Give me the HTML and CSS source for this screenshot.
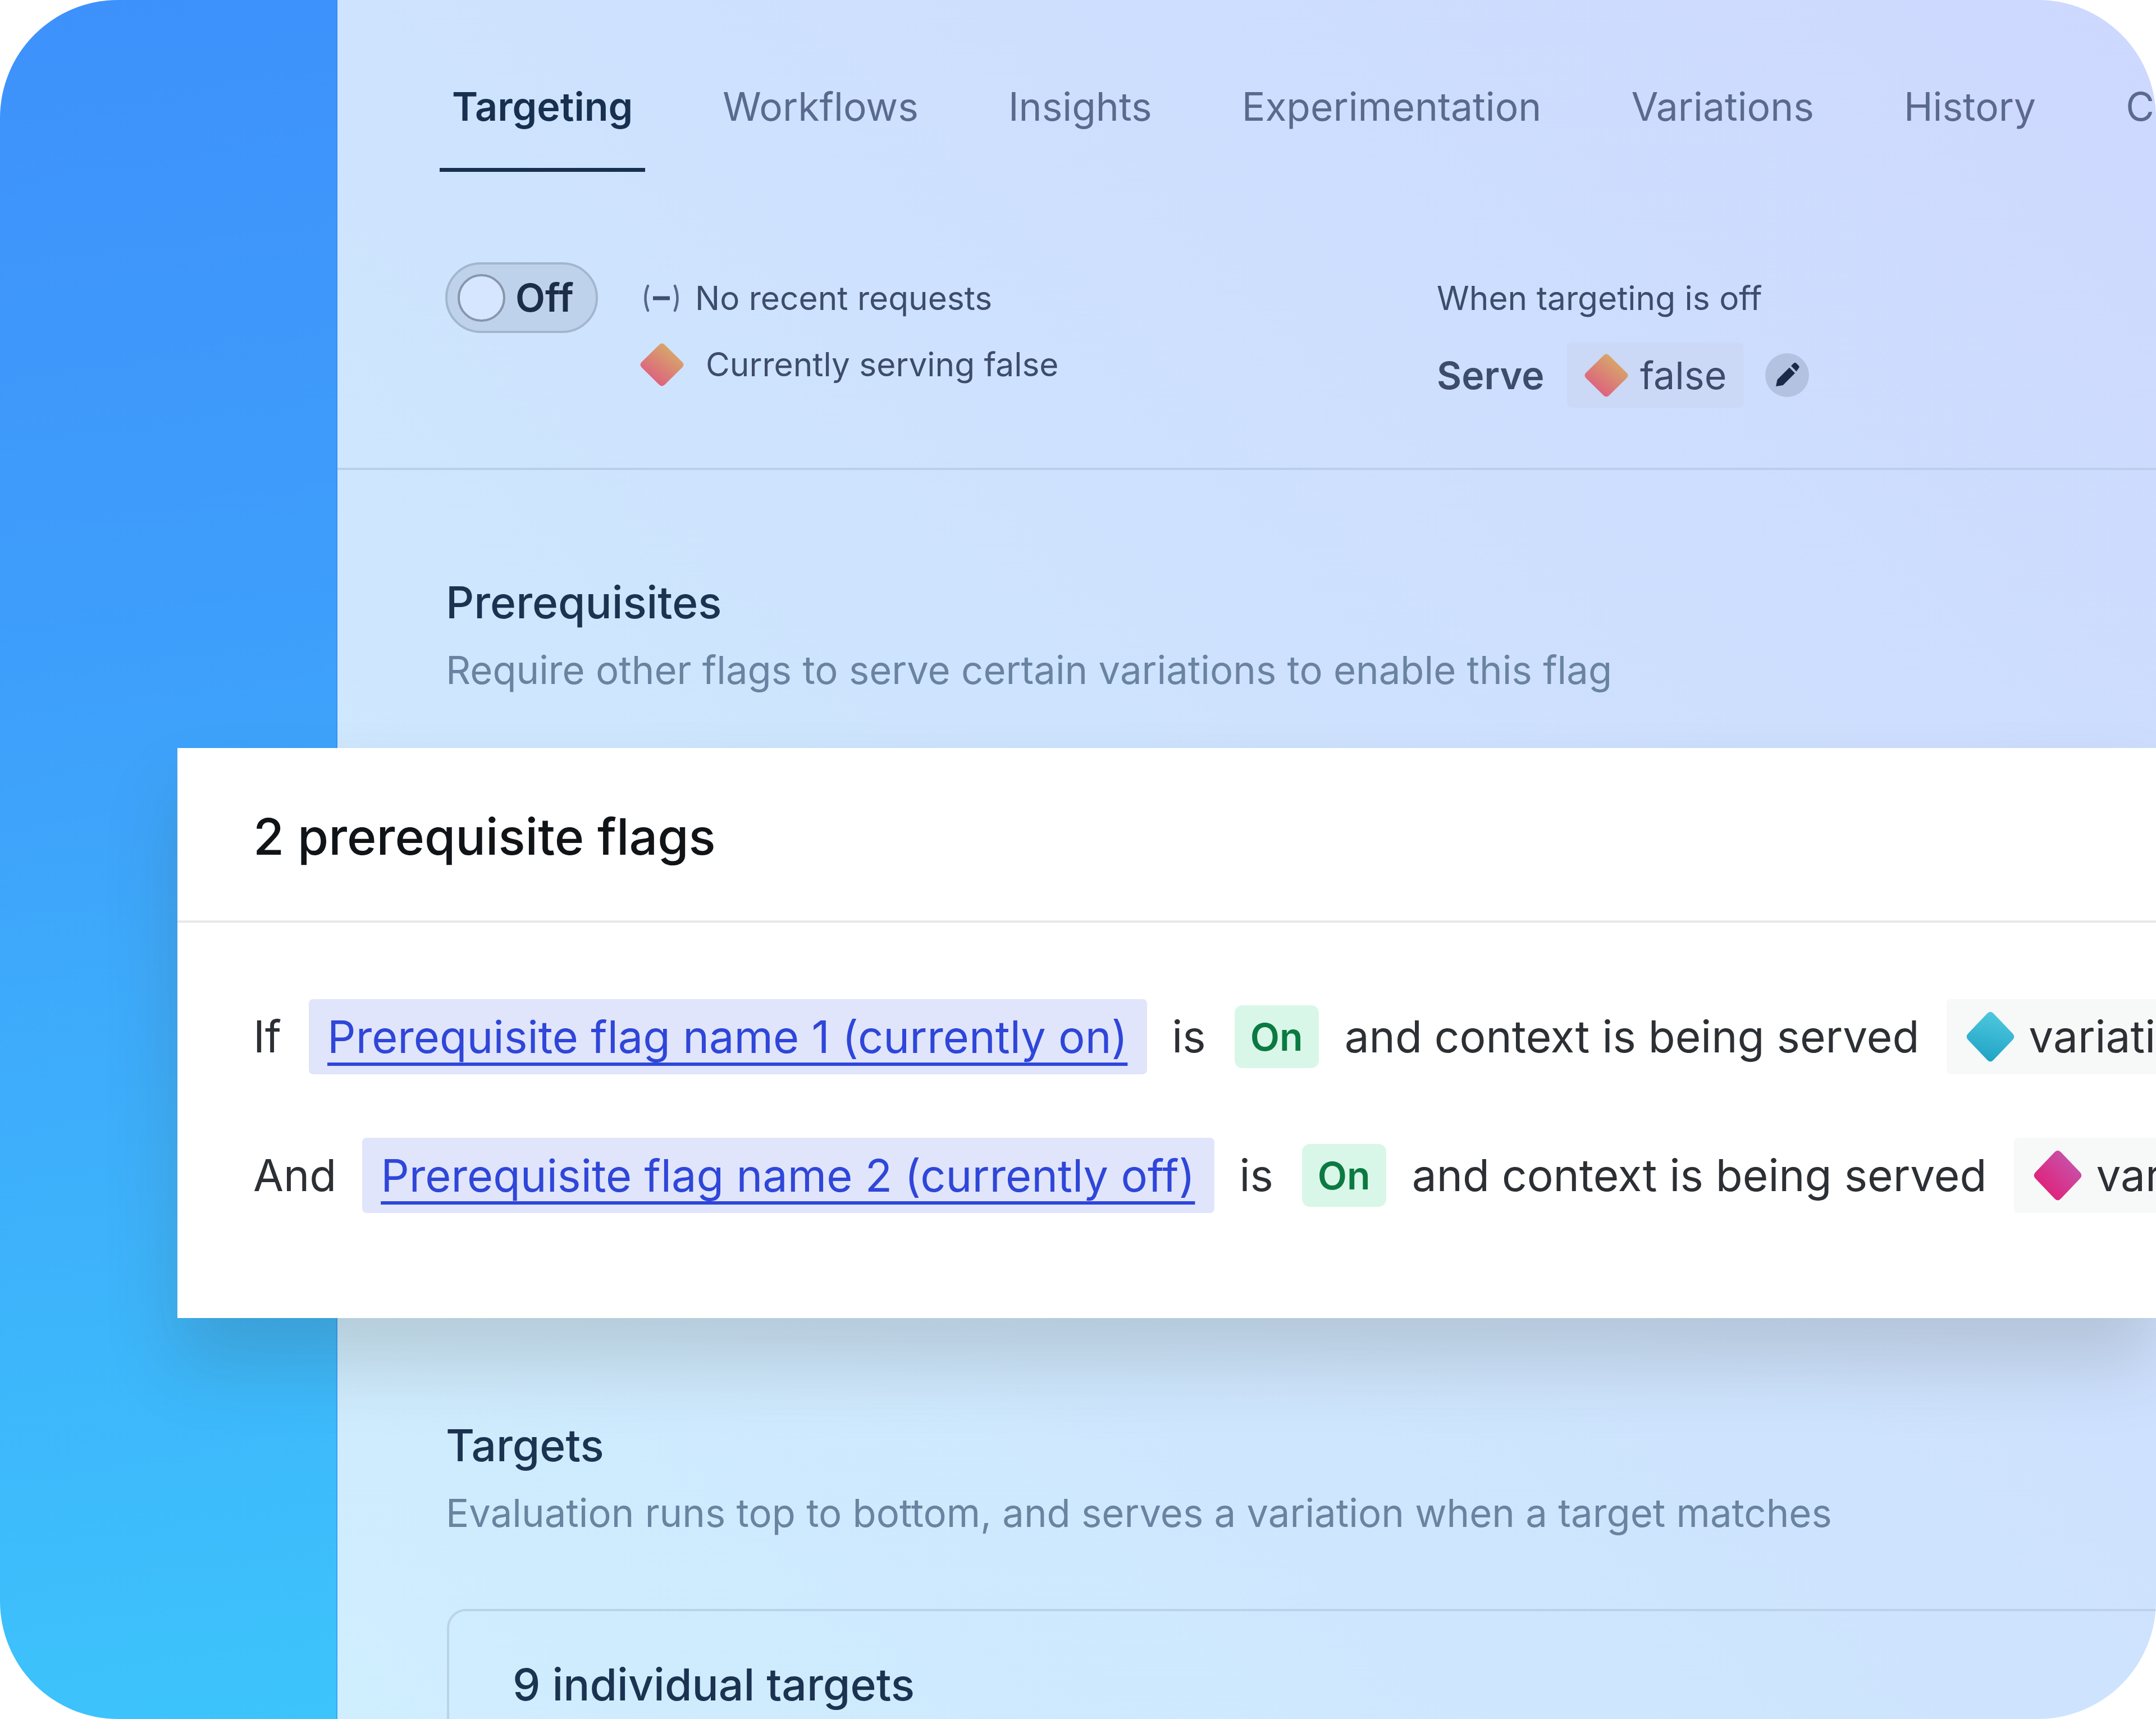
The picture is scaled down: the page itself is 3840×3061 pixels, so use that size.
FILE: index.html
```html
<!doctype html>
<html lang="en">
<head>
<meta charset="utf-8">
<title>Targeting</title>
<link rel="stylesheet" href="styles.css">
</head>
<body>
<svg class="defs" aria-hidden="true">
  <defs>
    <linearGradient id="warm" x1="0.8" y1="0.1" x2="0.2" y2="0.9"><stop offset="0" stop-color="#d6ad68"/><stop offset="1" stop-color="#de5c80"/></linearGradient>
    <linearGradient id="cyan" x1="0.6" y1="0" x2="0.4" y2="1"><stop offset="0" stop-color="#4fc8df"/><stop offset="1" stop-color="#1fa3c4"/></linearGradient>
    <linearGradient id="pink" x1="0.85" y1="0.15" x2="0.15" y2="0.85"><stop offset="0" stop-color="#c654ac"/><stop offset="1" stop-color="#e11f78"/></linearGradient>
  </defs>
</svg>
<div class="app">
  <aside class="sidebar"></aside>
  <main class="main">
    <nav class="tabs">
      <a class="tab tab-active">Targeting</a>
      <a class="tab">Workflows</a>
      <a class="tab">Insights</a>
      <a class="tab">Experimentation</a>
      <a class="tab">Variations</a>
      <a class="tab">History</a>
      <a class="tab">Code references</a>
    </nav>
    <section class="status">
      <div class="toggle"><span class="knob"></span><span class="toggle-label">Off</span></div>
      <div class="status-info">
        <div class="info-row">
          <svg class="ico-requests" viewBox="0 0 68 48"><path d="M10 2 Q1 24 10 46 M58 2 Q67 24 58 46" fill="none" stroke="#56668a" stroke-width="4.500" stroke-linecap="round"/><path d="M19 24 H49" stroke="#3f4f70" stroke-width="7"/></svg>
          <span>No recent requests</span>
        </div>
        <div class="info-row info-row-serving">
          <svg class="diamond diamond-sm" viewBox="0 0 80 80" preserveAspectRatio="none"><path fill="url(#warm)" d="M35 4 Q40 -1 45 4 L76 35 Q81 40 76 45 L45 76 Q40 81 35 76 L4 45 Q-1 40 4 35 Z"/></svg>
          <span>Currently serving false</span>
        </div>
      </div>
      <div class="status-off">
        <div class="off-label">When targeting is off</div>
        <div class="serve-row">
          <span class="serve">Serve</span>
          <span class="serve-chip">
            <svg class="diamond diamond-sm" viewBox="0 0 80 80" preserveAspectRatio="none"><path fill="url(#warm)" d="M35 4 Q40 -1 45 4 L76 35 Q81 40 76 45 L45 76 Q40 81 35 76 L4 45 Q-1 40 4 35 Z"/></svg>
            <span>false</span>
          </span>
          <span class="edit">
            <svg class="ico-edit" viewBox="0 0 78 78"><path fill="#1a2a48" d="M19 59 L21.500 47 L43 25.500 L53 35.500 L31.500 57 Z"/><path fill="#1a2a48" d="M46 22.500 L51 17.500 Q53 15.800 55 17.500 L60 22.500 Q61.500 24.500 60 26 L55.500 32.500 Z"/></svg>
          </span>
        </div>
      </div>
    </section>
    <section class="block block-prereq">
      <h2 class="block-title">Prerequisites</h2>
      <p class="block-sub">Require other flags to serve certain variations to enable this flag</p>
    </section>
    <section class="card">
      <h3 class="card-head">2 prerequisite flags</h3>
      <div class="card-body">
        <div class="rule">
          <span class="rule-label">If</span>
          <a class="flag-chip"><span class="flag-link">Prerequisite flag name 1 (currently on)</span></a>
          <span class="rule-is">is</span>
          <span class="on">On</span>
          <span class="rule-text">and context is being served</span>
          <span class="var-chip">
            <svg class="diamond diamond-lg" viewBox="0 0 80 80" preserveAspectRatio="none"><path fill="url(#cyan)" d="M35 4 Q40 -1 45 4 L76 35 Q81 40 76 45 L45 76 Q40 81 35 76 L4 45 Q-1 40 4 35 Z"/></svg>
            <span>variation 1</span>
          </span>
        </div>
        <div class="rule">
          <span class="rule-label rule-label-and">And</span>
          <a class="flag-chip"><span class="flag-link">Prerequisite flag name 2 (currently off)</span></a>
          <span class="rule-is">is</span>
          <span class="on">On</span>
          <span class="rule-text">and context is being served</span>
          <span class="var-chip">
            <svg class="diamond diamond-lg" viewBox="0 0 80 80" preserveAspectRatio="none"><path fill="url(#pink)" d="M35 4 Q40 -1 45 4 L76 35 Q81 40 76 45 L45 76 Q40 81 35 76 L4 45 Q-1 40 4 35 Z"/></svg>
            <span>variation 2</span>
          </span>
        </div>
      </div>
    </section>
    <section class="block block-targets">
      <h2 class="block-title">Targets</h2>
      <p class="block-sub">Evaluation runs top to bottom, and serves a variation when a target matches</p>
      <div class="targets-box">
        <h3 class="targets-title">9 individual targets</h3>
      </div>
    </section>
  </main>
</div>
</body>
</html>
```
FILE: styles.css
```css
* { box-sizing: border-box; }
html, body { margin: 0; padding: 0; background: #fff; overflow: hidden; }
body { font-family: Inter, "Liberation Sans", sans-serif; width: 3840px; height: 3061px; }
.defs { position: absolute; width: 0; height: 0; }
h2, h3, p { margin: 0; font-weight: 400; }

.app {
  display: flex;
  width: 3840px;
  height: 3061px;
  border-radius: 210px;
  overflow: hidden;
}
.sidebar {
  flex: 0 0 601px;
  background: linear-gradient(172deg, #3e91fb 0%, #3e9dfb 35%, #3dc4fb 100%);
  border-right: 2px solid rgba(40, 130, 255, 0.45);
}
.main {
  flex: 1 1 auto;
  min-width: 0;
  background: linear-gradient(to top right, #cfeefe, #cdd8fe);
}

.tabs {
  display: flex;
  gap: 116px;
  padding: 140px 0 0 182px;
  height: 306px;
  white-space: nowrap;
}
.tab {
  flex: none;
  height: 166px;
  padding: 0 22px;
  font-size: 69.5px;
  line-height: 100px;
  color: #5a6a8e;
}
.tab-active {
  font-size: 70px;
  font-weight: 600;
  color: #18304f;
  border-bottom: 7px solid #18304f;
}

.status {
  display: flex;
  align-items: flex-start;
  height: 531px;
  padding: 161px 0 0 192px;
  border-bottom: 4px solid #bacfe9;
  font-size: 58.6px;
  line-height: 78px;
  color: #3d4c6b;
  white-space: nowrap;
}
.toggle {
  flex: none;
  display: flex;
  align-items: center;
  width: 272px;
  height: 126px;
  padding-left: 18px;
  gap: 18px;
  border: 4px solid #a4b6ce;
  border-radius: 63px;
  background: #bfd2eb;
}
.knob {
  width: 85px;
  height: 85px;
  border: 4px solid #8896ab;
  border-radius: 50%;
  background: #d6e6fe;
}
.toggle-label { font-size: 69px; font-weight: 600; color: #1c2d4a; }
.status-info {
  flex: 0 0 1420px;
  display: flex;
  flex-direction: column;
  gap: 40px;
  margin-left: 74px;
  padding-top: 25px;
}
.info-row { display: flex; align-items: center; height: 78px; }
.ico-requests { width: 68px; height: 48px; margin: 0 26px 0 5px; }
.diamond { flex: none; display: block; }
.diamond-sm { width: 80px; height: 79px; }
.info-row-serving .diamond { margin-right: 38px; }
.status-off { padding-top: 25px; }
.serve-row { display: flex; align-items: center; margin-top: 40px; }
.serve { font-size: 68px; font-weight: 600; color: #3e4c6c; width: 232px; }
.serve-chip {
  display: flex;
  align-items: center;
  width: 314px;
  height: 116px;
  padding-left: 30px;
  gap: 20px;
  background: #cbd8f6;
  border-radius: 8px;
  font-size: 68px;
}
.edit {
  display: flex;
  width: 78px;
  height: 78px;
  margin-left: 39px;
  border-radius: 50%;
  background: #b4c2e2;
}
.ico-edit { width: 78px; height: 78px; }

.block { padding-left: 195px; }
.block-title { margin-left: -2px; font-size: 78.4px; font-weight: 500; line-height: 100px; color: #1b3350; }
.block-sub { margin: 20px 0 0 -2px; font-size: 68.8px; line-height: 100px; color: #6a83a0; white-space: nowrap; }
.block-prereq { margin-top: 186px; }

.card {
  position: relative;
  z-index: 1;
  height: 1015px;
  margin: 89px 0 0 -285px;
  overflow: hidden;
  background: #fff;
  box-shadow: 0 80px 120px rgba(55, 55, 35, 0.17);
}
.card-head {
  display: flex;
  align-items: center;
  height: 311px;
  padding: 8px 0 0 135px;
  border-bottom: 4px solid #e7e8ea;
  font-size: 89.4px;
  font-weight: 500;
  color: #111417;
}
.card-body {
  display: flex;
  flex-direction: column;
  gap: 113px;
  padding: 136px 0 0 135px;
}
.rule {
  display: flex;
  align-items: center;
  height: 134px;
  font-size: 78.3px;
  line-height: 100px;
  color: #2c2f33;
  white-space: nowrap;
}
.rule > span { flex: none; }
.rule-label { margin-right: 49px; }
.rule-label-and { margin-right: 46px; }
.rule-is { margin-right: 51px; }
.rule-text { margin-right: 49px; }
.flag-chip {
  flex: none;
  display: flex;
  align-items: center;
  height: 134px;
  margin-right: 44px;
  padding: 0 35px 0 33px;
  background: #e0e5fc;
  border-radius: 8px;
  font-size: 79.25px;
}
.flag-link {
  color: #2f46d9;
  text-decoration: underline;
  text-decoration-thickness: 6px;
  text-underline-offset: 17px;
  text-decoration-skip-ink: none;
}
.on {
  width: 150px;
  height: 112px;
  margin-right: 46px;
  border-radius: 14px;
  background: #d9f7e8;
  color: #0b7a42;
  font-size: 68px;
  font-weight: 600;
  line-height: 112px;
  text-align: center;
}
.var-chip {
  display: flex;
  align-items: center;
  height: 134px;
  padding-left: 34px;
  gap: 24px;
  background: #f7f8f8;
  border-radius: 8px;
}
.diamond-lg { width: 88px; height: 92px; }

.block-targets { margin-top: 177px; }
.targets-box {
  width: 3200px;
  height: 400px;
  margin-top: 121px;
  padding: 81px 0 0 113px;
  border: 4px solid #bbd2ea;
  border-radius: 34px;
}
.targets-title { font-size: 78.6px; font-weight: 500; line-height: 100px; color: #1b3350; }
```
